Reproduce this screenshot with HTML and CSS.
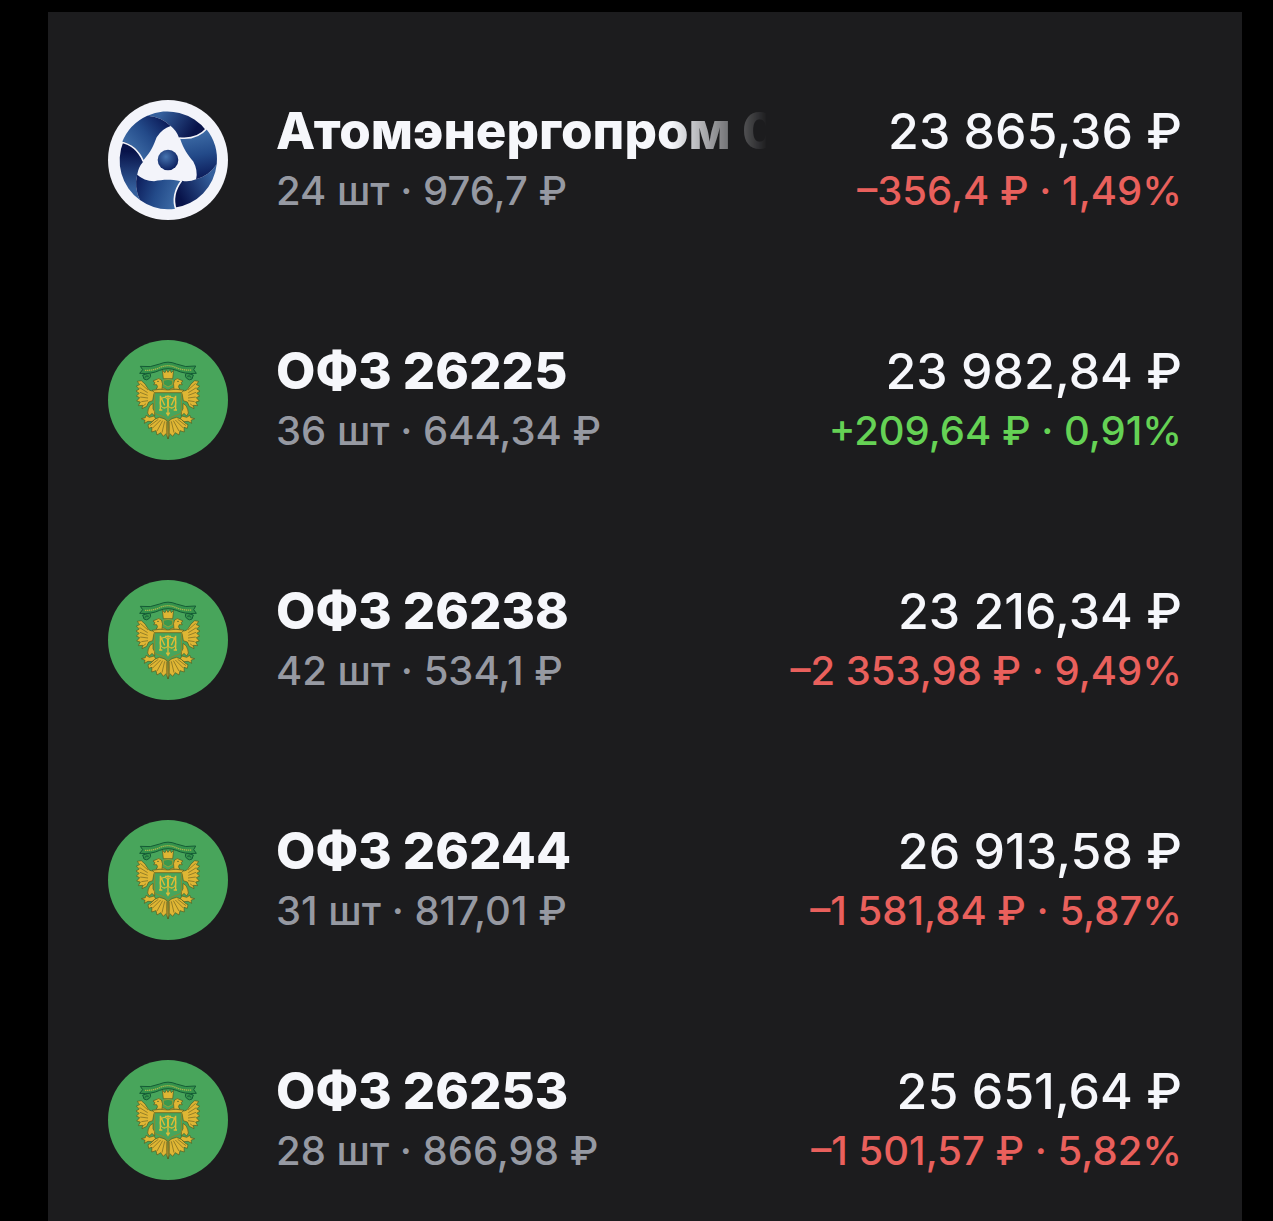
FILE: index.html
```html
<!DOCTYPE html>
<html lang="ru">
<head>
  <meta charset="UTF-8">
  <meta name="viewport" content="width=device-width, initial-scale=1.0">
  <title>Облигации</title>
  <link rel="stylesheet" href="styles.css">
</head>
<body>
  <svg class="defs" aria-hidden="true">
    <defs>
      <linearGradient id="blade" gradientUnits="userSpaceOnUse" x1="95" y1="185" x2="205" y2="90">
        <stop offset="0" stop-color="#3f6ea8"/>
        <stop offset="0.5" stop-color="#234a89"/>
        <stop offset="1" stop-color="#0b1a58"/>
      </linearGradient>
      <linearGradient id="crescent" gradientUnits="userSpaceOnUse" x1="190" y1="70" x2="285" y2="130">
        <stop offset="0" stop-color="#345f9c"/>
        <stop offset="1" stop-color="#08134a"/>
      </linearGradient>
      <radialGradient id="core" cx="0.4" cy="0.35" r="0.65">
        <stop offset="0" stop-color="#4674b0"/>
        <stop offset="1" stop-color="#0d2160"/>
      </radialGradient>

      <g id="atom-third">
        <path fill="url(#crescent)" d="M148 77A147 147 0 0 1 325 122Q285 155 243 143Q236 122 218 108Q190 80 148 77Z"/>
        <path fill="url(#blade)" d="M72 157A147 147 0 0 1 148 77Q190 80 218 108Q192 116 176 142C166 168 160 184 135 212Q115 165 72 157Z"/>
      </g>
      <symbol id="atom" viewBox="30 30 360 360">
        <circle cx="210" cy="210" r="180" fill="#f3f4fa"/>
        <use href="#atom-third"/>
        <use href="#atom-third" transform="rotate(120 210 210)"/>
        <use href="#atom-third" transform="rotate(240 210 210)"/>
        <g fill="none" stroke="#f3f4fa" stroke-width="5">
          <path d="M68 156Q115 165 136 214"/>
          <path d="M68 156Q115 165 136 214" transform="rotate(120 210 210)"/>
          <path d="M68 156Q115 165 136 214" transform="rotate(240 210 210)"/>
        </g>
        <circle cx="210" cy="210" r="31" fill="url(#core)"/>
      </symbol>

      <!-- правая половина герба, левая получается отражением -->
      <g id="eagle-half">
        <path class="gold" d="M212 180Q228 168 244 178Q262 188 270 176Q278 160 290 152L302 154L295 164L305 168L296 177L306 183L296 190L305 198L295 203L304 213L293 216L299 227L286 226L288 236L274 229L268 216L256 212L252 190L212 188Z"/>
        <path class="feather" d="M270 180L293 160M271 188L295 173M271 196L294 187M270 204L293 201M270 212L290 215M276 221L286 229"/>
        <path class="gold" d="M228 178Q224 158 230 150Q238 142 246 149L255 153L249 158L253 164L244 164Q238 170 246 178Z"/>
        <circle cx="240" cy="154" r="2" fill="#28502a"/>
        <path class="gold" d="M255 220Q267 226 269 238Q275 250 266 258L258 250L250 258Q248 244 255 236Z"/>
        <path class="gold" d="M252 258L266 262L276 256L278 263L290 266L279 271L281 280L270 274L258 275L247 266Z"/>
        <path class="gold" d="M211 274L222 266L236 262L250 268L262 280L270 284L268 295L258 292L259 306L246 302L243 315L232 308L224 319L216 311L210 327Z"/>
        <path class="feather" d="M215 274L214 312M220 274L228 308M226 272L243 303M232 270L256 294M239 268L264 287"/>
        <path class="ribbon" d="M262 128L286 135L282 147Q274 153 266 145Q260 140 263 132M268 139Q276 134 279 143"/>
      </g>
      <symbol id="eagle" viewBox="30 30 360 360">
        <circle cx="210" cy="210" r="180" fill="#48a55b"/>
        <use href="#eagle-half"/>
        <use href="#eagle-half" transform="matrix(-1 0 0 1 420 0)"/>
        <path class="ribbon" d="M127 109Q158 114 185 102Q210 91 235 102Q262 114 293 108L287 119L295 130Q260 133 235 121Q210 111 185 121Q160 133 125 130L134 119Z"/>
        <path class="motto" d="M141 121Q165 122 187 112Q210 102 233 112Q255 122 280 120"/>
        <path class="gold" d="M193 121L201 128L205 119L210 127L216 119L220 128L227 121L224 146L196 146Z"/>
        <path d="M196 151Q210 145 224 151V163L210 171L196 163Z" fill="#3b984d" stroke="#c39b28" stroke-width="2"/>
        <path d="M170 187H250V246Q248 253 234 256Q218 260 210 271Q202 260 186 256Q172 253 170 246Z" fill="#48a55b" stroke="#8f8a2c" stroke-width="3"/>
        <path class="gold" d="M162 181Q186 175 210 180Q234 175 258 181L250 188H170Z"/>
        <g class="monogram">
          <ellipse cx="199" cy="218" rx="12" ry="16"/>
          <ellipse cx="221" cy="218" rx="12" ry="16"/>
          <path d="M187 197V240M233 197V240M183 240H193M227 240H237M187 198L200 226M233 198L220 226M210 196V254M201 199H219M205 248L210 256L215 248"/>
        </g>
      </symbol>
    </defs>
  </svg>

  <main class="portfolio">
    <ul class="bonds">
      <li class="bond">
        <svg class="logo" aria-hidden="true"><use href="#atom"/></svg>
        <div class="info">
          <div class="name name-long">Атомэнергопром 0</div>
          <div class="details">24 шт · 976,7 ₽</div>
        </div>
        <div class="total">
          <div class="sum">23 865,36 ₽</div>
          <div class="change down">–356,4 ₽ · 1,49%</div>
        </div>
      </li>
      <li class="bond">
        <svg class="logo" aria-hidden="true"><use href="#eagle"/></svg>
        <div class="info">
          <div class="name">ОФЗ 26225</div>
          <div class="details">36 шт · 644,34 ₽</div>
        </div>
        <div class="total">
          <div class="sum">23 982,84 ₽</div>
          <div class="change up">+209,64 ₽ · 0,91%</div>
        </div>
      </li>
      <li class="bond">
        <svg class="logo" aria-hidden="true"><use href="#eagle"/></svg>
        <div class="info">
          <div class="name">ОФЗ 26238</div>
          <div class="details">42 шт · 534,1 ₽</div>
        </div>
        <div class="total">
          <div class="sum">23 216,34 ₽</div>
          <div class="change down">–2 353,98 ₽ · 9,49%</div>
        </div>
      </li>
      <li class="bond">
        <svg class="logo" aria-hidden="true"><use href="#eagle"/></svg>
        <div class="info">
          <div class="name">ОФЗ 26244</div>
          <div class="details">31 шт · 817,01 ₽</div>
        </div>
        <div class="total">
          <div class="sum">26 913,58 ₽</div>
          <div class="change down">–1 581,84 ₽ · 5,87%</div>
        </div>
      </li>
      <li class="bond">
        <svg class="logo" aria-hidden="true"><use href="#eagle"/></svg>
        <div class="info">
          <div class="name">ОФЗ 26253</div>
          <div class="details">28 шт · 866,98 ₽</div>
        </div>
        <div class="total">
          <div class="sum">25 651,64 ₽</div>
          <div class="change down">–1 501,57 ₽ · 5,82%</div>
        </div>
      </li>
    </ul>
  </main>
</body>
</html>
```
FILE: styles.css
```css
* { box-sizing: border-box; }
body { margin: 0; padding: 12px 31px 0 48px; background: #000; color: #f6f7fb; font-family: Inter, "Liberation Sans", sans-serif; }
.defs { display: block; width: 0; height: 0; }

.portfolio { padding: 88px 60px 41px; background: #1c1c1e; }
.bonds { display: flex; flex-direction: column; gap: 120px; margin: 0; padding: 0; list-style: none; }
.bond {
  display: grid;
  grid-template-columns: 120px minmax(0, 13fr) minmax(0, 10fr);
  height: 120px;
}
.logo { width: 120px; height: 120px; }
.info { padding: 1px 0 0 48px; }
.total { display: flex; flex-direction: column; align-items: flex-end; padding-top: 1px; }

.name, .sum { line-height: 60px; white-space: nowrap; }
.name { font-size: 51px; font-weight: 800; }
.name-long {
  overflow: hidden;
  -webkit-mask-image: linear-gradient(to left, transparent, #000 96px);
  mask-image: linear-gradient(to left, transparent, #000 96px);
}
.sum { font-size: 50px; font-weight: 500; }
.details, .change { font-size: 40px; font-weight: 500; line-height: 60px; white-space: nowrap; }
.details { color: #9699a2; }
.up { color: #65d255; }
.down { color: #e9605c; }

/* герб */
.gold { fill: #e0b634; stroke: #4f5a22; stroke-width: 2; stroke-linejoin: round; }
.feather { fill: none; stroke: #6f6420; stroke-width: 2; }
.ribbon { fill: #35934c; stroke: #145b35; stroke-width: 3; stroke-linejoin: round; }
.motto { fill: none; stroke: #a9b64a; stroke-width: 4; stroke-dasharray: 4 2; }
.monogram { fill: none; stroke: #dfbb36; stroke-width: 4; }
```
